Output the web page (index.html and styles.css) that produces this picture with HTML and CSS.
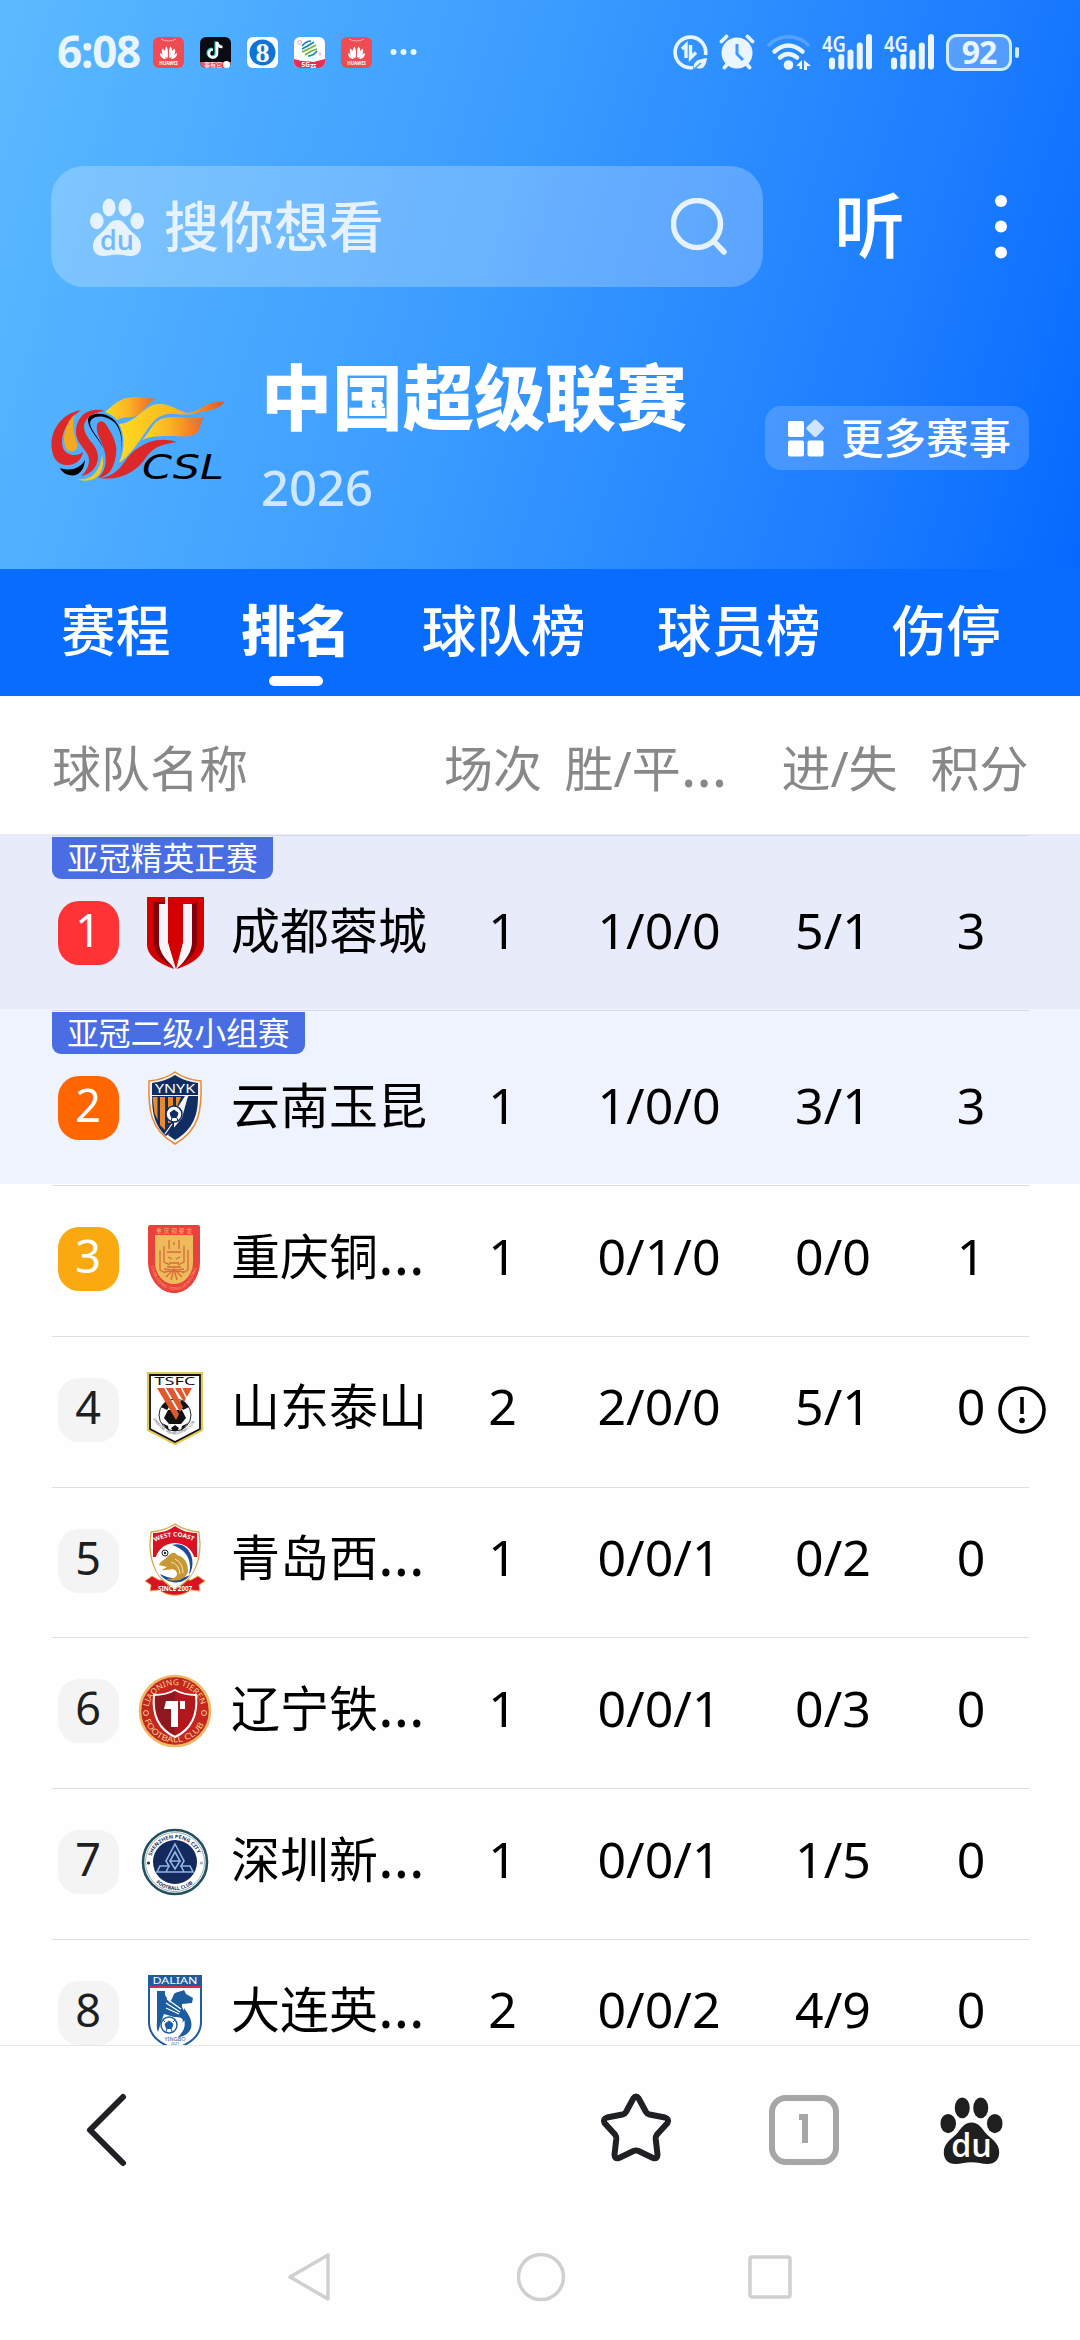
FILE: index.html
```
<!DOCTYPE html>
<html lang="zh-CN">
<head>
    <meta charset="UTF-8">
    <meta name="viewport" content="width=device-width, initial-scale=1.0">
    <title>中国超级联赛</title>
    <link rel="stylesheet" href="styles.css">
</head>
<body>
    <!-- shared shapes -->
    <svg class="defs" width="0" height="0">
        <symbol id="huawei" viewBox="0 0 31 31">
            <rect width="31" height="31" rx="6" fill="#ef4b52"/>
            <path d="M8 2q7.500 4 15 0" fill="none" stroke="#ffb3a8" stroke-width="1"/>
            <path d="M14.800 21C11 17 11 12 13.500 9.500c1.500 2 1.800 7 1.300 11.500zM16.200 21C20 17 20 12 17.500 9.500c-1.500 2-1.800 7-1.300 11.500zM14 21.300C8.500 18 8 14 9.500 11.500c2.500 2 4 5.500 4.500 9.800zM17 21.300c5.500-3.300 6-7.300 4.500-9.800-2.500 2-4 5.500-4.500 9.800zM13 22c-4 0-6-2.500-6-6 2.500 1 5 3 6 6zM18 22c4 0 6-2.500 6-6-2.500 1-5 3-6 6z" fill="#fff"/>
        </symbol>
        <symbol id="signal" viewBox="0 0 51 36">
            <path d="M10 26.500v6M19.300 23v9.500M28.500 18.500v14M37.800 11.500v21M47 3v29.500" fill="none" stroke="currentColor" stroke-width="6" stroke-linecap="round"/>
        </symbol>
        <symbol id="paw" viewBox="0 0 54 58">
            <ellipse cx="19" cy="9.500" rx="6.500" ry="9"/>
            <ellipse cx="35" cy="9.500" rx="6.500" ry="9"/>
            <ellipse cx="6.800" cy="23" rx="6.800" ry="8.300"/>
            <ellipse cx="47.200" cy="23" rx="6.800" ry="8.300"/>
            <path d="M27 22c6 0 9 5 12 9 4 5 12 8 12 17 0 6-4 10-10 10-5 0-9-1.500-14-1.500S18 58 13 58C7 58 3 54 3 48c0-9 8-12 12-17 3-4 6-9 12-9z"/>
        </symbol>
    </svg>

    <header class="hero">
        <div class="statusbar">
            <span class="clock">6:08</span>
            <div class="notices">
                <svg width="31" height="31"><use href="#huawei"/><text x="15.500" y="27.500" font-size="4.500" text-anchor="middle" font-weight="700" fill="#fff">HUAWEI</text></svg>
                <svg width="31" height="31" viewBox="0 0 31 31">
                    <rect width="31" height="31" rx="6" fill="#0b0b14"/>
                    <path d="M17 5v11.500a4 4 0 1 1-4-4M17 5c.5 3 2.500 5 5.500 5" fill="none" stroke="#25e0dc" stroke-width="3" transform="translate(-1 -.600)"/>
                    <path d="M17 5v11.500a4 4 0 1 1-4-4M17 5c.5 3 2.500 5 5.500 5" fill="none" stroke="#fff" stroke-width="2.600"/>
                    <path d="M0 25h31a6 6 0 0 1-6 6H6a6 6 0 0 1-6-6z" fill="#ef5258"/>
                    <text x="13" y="30" font-size="6" fill="#fff" text-anchor="middle">事有它</text>
                    <circle cx="26.500" cy="27.500" r="3.500" fill="#fff"/>
                </svg>
                <svg width="31" height="31" viewBox="0 0 31 31">
                    <rect width="31" height="31" rx="6" fill="#fff"/>
                    <circle cx="15.500" cy="15.500" r="13" fill="#0e74d8"/>
                    <text x="15.500" y="25" class="eight" font-size="28" fill="#fff" text-anchor="middle">8</text>
                </svg>
                <svg width="31" height="31" viewBox="0 0 31 31">
                    <rect width="31" height="31" rx="6" fill="#fff"/>
                    <g fill="none" stroke-width="1.700">
                        <path d="M8 9q4-5 9-5M8 12q6-3 12-7" stroke="#1683c4"/>
                        <path d="M8 15q7-3 14-7M11 18q5-4 12-6" stroke="#6db83a"/>
                        <path d="M14 19q5 0 9-5" stroke="#1683c4"/>
                    </g>
                    <circle cx="5.500" cy="5.500" r="2" fill="none" stroke="#f5a3b4"/>
                    <circle cx="26" cy="17" r="1.500" fill="#f9b9c5"/>
                    <path d="M0 22q15.500 5 31 0v3a6 6 0 0 1-6 6H6a6 6 0 0 1-6-6z" fill="#ee2a52"/>
                    <text x="15" y="29.500" font-size="6.500" font-weight="700" fill="#fff" text-anchor="middle">5G云</text>
                </svg>
                <svg width="31" height="31"><use href="#huawei"/><text x="15.500" y="27.500" font-size="4.500" text-anchor="middle" font-weight="700" fill="#fff">HUAWEI</text></svg>
                <svg class="more-dots" width="27" height="8" viewBox="0 0 27 8"><circle cx="3.500" cy="4" r="3"/><circle cx="13.500" cy="4" r="3"/><circle cx="23.500" cy="4" r="3"/></svg>
            </div>
            <div class="indicators">
                <svg width="35" height="35" viewBox="0 0 35 35">
                    <path d="M20 32.500A15.300 15.300 0 1 1 32.500 20" fill="none" stroke="currentColor" stroke-width="3.600"/>
                    <path d="M9 14l4-4v13M17.500 10v13l5.500-5.500" fill="none" stroke="currentColor" stroke-width="3.400"/>
                    <path d="M21 34c-2-7 4-10 13-11-1 9-5 12-10 10z"/>
                    <path d="M20 35l8-7" stroke="#3b99ff" stroke-width="1.400"/>
                </svg>
                <svg width="36" height="36" viewBox="0 0 36 36">
                    <circle cx="18" cy="19" r="15.500"/>
                    <path d="M2.500 7.500l5-5M33.500 7.500l-5-5M5.500 33.500l5-6M30.500 33.500l-5-6" fill="none" stroke="currentColor" stroke-width="3.800" stroke-linecap="round"/>
                    <path d="M18 10v10l6 6" fill="none" stroke="#3b99ff" stroke-width="3"/>
                </svg>
                <svg class="wifi" width="44" height="35" viewBox="0 0 44 35">
                    <g fill="none" stroke="currentColor" stroke-linecap="round">
                        <path d="M2 10C12-1 31-1 41 10" stroke-width="3.500" opacity=".22"/>
                        <path d="M7.500 16.500q13.500-12 28 0" stroke-width="4.500"/>
                        <path d="M13 22.500q8-7 17 0" stroke-width="4.500"/>
                    </g>
                    <circle cx="21.500" cy="30" r="4.800"/>
                    <path d="M29 31l6-6v9h-2.500v-3zM37 25l7 6h-4v4h-3z"/>
                </svg>
                <svg class="signal" width="51" height="36"><use href="#signal"/><text x="0" y="18" font-size="22" font-weight="600" textLength="24" lengthAdjust="spacingAndGlyphs">4G</text></svg>
                <svg class="signal" width="51" height="36"><use href="#signal"/><text x="0" y="18" font-size="22" font-weight="600" textLength="24" lengthAdjust="spacingAndGlyphs">4G</text></svg>
                <div class="battery"><span class="level">92</span></div>
            </div>
        </div>

        <div class="searchbar">
            <div class="search-box">
                <svg class="search-paw" width="54" height="58" viewBox="0 0 54 58">
                    <use href="#paw"/>
                    <text x="27" y="52" class="du" font-size="27" text-anchor="middle" fill="#75b8ff">du</text>
                </svg>
                <span class="placeholder">搜你想看</span>
                <svg class="magnifier" width="56" height="57" viewBox="0 0 56 57">
                    <circle cx="26" cy="26" r="23.500"/>
                    <path d="M43 43.500l10 10.500"/>
                </svg>
            </div>
            <span class="listen">听</span>
            <svg class="menu-dots" width="12" height="64" viewBox="0 0 12 64"><circle cx="6" cy="6" r="6"/><circle cx="6" cy="31.500" r="6"/><circle cx="6" cy="57.500" r="6"/></svg>
        </div>

        <div class="league">
            <svg class="csl" width="174" height="88" viewBox="0 0 174 88">
                <defs>
                    <linearGradient id="flame"><stop offset="0" stop-color="#ffd91f"/><stop offset=".45" stop-color="#fbb324"/><stop offset="1" stop-color="#ee6426"/></linearGradient>
                    <linearGradient id="body"><stop offset="0" stop-color="#ffd91f"/><stop offset=".6" stop-color="#f9b322"/><stop offset="1" stop-color="#e8542a"/></linearGradient>
                </defs>
                <path d="M30 14C8 18-2 38 1 54c1 10 8 16 16 15 8 0 14-6 15-13-6 5-17 4-20-4C8 41 16 24 30 14z" fill="#dc2828"/>
                <path d="M24 18c-9 8-13 22-10 32 3 9 14 6 12-3-3-9-6-18-2-29z" fill="#f5a91e"/>
                <path d="M54 15C38 10 25 20 25 36c0 13 13 18 13 28 0 6-3 12-8 16 9-1 17-9 17-19 0-13-13-17-14-30 0-9 10-15 21-16z" fill="#dc2828"/>
                <path d="M69 62c3-14 2-27-5-35-7-7-19-9-24-3-4 7 7 15 13 29-6-11-16-20-16-29 0-7 15-9 24-2 10 8 12 22 8 40z" fill="#000"/>
                <path d="M46 29c1-5 7-5 10 1 8 13 13 23 6 40-2 6-8 11-15 12 7-7 9-14 7-25-2-10-10-20-8-28z" fill="#dc2828"/>
                <path d="M26 83c13 2 23-6 25-24 3 10 0 22-11 25-5 1-10 1-14-1z" fill="#f6c91e"/>
                <path d="M9 72c9 3 19 2 25-8-1 12-8 17-16 15-4-1-8-4-9-7z" fill="#000"/>
                <path d="M54 16C64 8 69 1 85 1c8 0 14 1 20 2-11 4-13 17-24 18-6 1-10 0-15 3-3-4-7-6-12-8z" fill="url(#flame)"/>
                <path d="M68 28c18-1 24-19 39-20 12-1 20 7 30 9 14-2 18-13 36-11-3 8-21 9-31 12-12 2-22-3-32 2-14 6-20 31-42 47 6-13 6-28 0-39z" fill="url(#body)"/>
                <path d="M91 44c8-7 11-20 22-22 13-3 28 2 40-1-5 6-2 17-14 19-11 2-33-3-48 4z" fill="url(#flame)"/>
                <path d="M126 46c-15-5-29-1-39 6-15 9-15 27-38 30 20 3 37-6 47-22 8-10 16-12 30-14z" fill="#dc2828"/>
                <text x="91" y="83" class="csl-name" font-size="33" fill="#000" textLength="82" lengthAdjust="spacingAndGlyphs">CSL</text>
            </svg>
            <div class="league-info">
                <h1 class="league-name">中国超级联赛</h1>
                <div class="season">2026</div>
            </div>
            <div class="more-button">
                <svg width="36" height="40" viewBox="0 0 36 40">
                    <rect y="3" width="16" height="16" rx="2"/>
                    <rect y="22.500" width="16" height="16" rx="2"/>
                    <rect x="19.500" y="22.500" width="16" height="16" rx="2"/>
                    <rect x="20.500" y="3.500" width="13.500" height="13.500" rx="2" opacity=".75" transform="rotate(45 27.200 10.200)"/>
                </svg>
                <span>更多赛事</span>
            </div>
        </div>
    </header>

    <nav class="tabs">
        <span class="tab">赛程</span>
        <span class="tab active">排名</span>
        <span class="tab">球队榜</span>
        <span class="tab">球员榜</span>
        <span class="tab">伤停</span>
    </nav>

    <main class="standings">
        <div class="row head">
            <span class="team-head">球队名称</span>
            <span class="played-head">场次</span>
            <span class="wdl-head">胜/平<i class="dots">…</i></span>
            <span class="goals-head">进/失</span>
            <span class="points-head">积分</span>
        </div>

        <div class="zone zone-elite">
            <div class="line"></div>
            <div class="tag">亚冠精英正赛</div>
            <div class="row">
                <span class="rank first">1</span>
                <svg class="crest" width="74" height="74" viewBox="0 0 74 74">
                    <path d="M9 1h18v7h-6v39l15 26C18 67 9 58 9 49zM30 1h36v48c0 9-9 18-27 24l15-27V8h-9v39l-7 26-8-26z" fill="#d40000"/>
                    <path d="M16 6h11v2h-6v39l12 23C20 62 16 54 16 46zM59 6v40c0 8-6 16-15 23l10-23V8z" fill="#850009"/>
                    <path d="M21 8h9v39l7 25C25 62 21 54 21 46zM45 8h9v38c0 8-5 18-15 26l6-25z" fill="#f7f5fc"/>
                </svg>
                <span class="team">成都蓉城</span>
                <span>1</span><span>1/0/0</span><span>5/1</span><span>3</span>
            </div>
        </div>

        <div class="zone zone-second">
            <div class="line"></div>
            <div class="tag">亚冠二级小组赛</div>
            <div class="row">
                <span class="rank second">2</span>
                <svg class="crest" width="74" height="74" viewBox="0 0 74 74">
                    <path d="M37 1c8 6 16 8 26 9 1 28-1 49-26 63C12 59 10 38 11 10c10-1 18-3 26-9z" fill="#f3f3f3" stroke="#e98a2e" stroke-width="1.500"/>
                    <path d="M37 4c8 5 15 7 23 8v12H14V12c8-1 15-3 23-8zM14 25h33L36 42v17l-8 6C17 55 14 43 14 25z" fill="#102e62"/>
                    <path d="M60 25c0 18-4 33-23 44l-7-5 14-17 6-22z" fill="#102e62"/>
                    <path d="M14.500 26h5v23l-3-7zM22 26h5v33l-5-5zM30 26h5v14l-2 9v3h-3zM38 26h5l-5 12z" fill="#e98a2e"/>
                    <path d="M50 25l-9 13M34 53l-7 10" stroke="#fff" stroke-width="1.200"/>
                    <text x="37" y="22" font-size="12" class="block" fill="#fff" text-anchor="middle" textLength="40" lengthAdjust="spacingAndGlyphs">YNYK</text>
                    <circle cx="36" cy="43" r="8" fill="#fff" stroke="#102e62" stroke-width="1.500"/>
                    <path d="M36 39l4 3-1.500 4.500h-5L32 42zM29 40l2-3M43 40l-2-3M33 50l1-3M40 50l-1-3" fill="#102e62" stroke="#102e62"/>
                </svg>
                <span class="team">云南玉昆</span>
                <span>1</span><span>1/0/0</span><span>3/1</span><span>3</span>
            </div>
        </div>

        <div class="zone">
            <div class="line"></div>
            <div class="row">
                <span class="rank third">3</span>
                <svg class="crest" width="74" height="74" viewBox="0 0 74 74">
                    <path d="M10 5q0-2 2-2h48q2 0 2 2v34c0 17-11 32-26 32S10 56 10 39z" fill="#e9413b"/>
                    <path d="M17 13h38v27c0 12-8 22-19 22S17 52 17 40z" fill="#eebb5c"/>
                    <g fill="none" stroke="#d96a39" stroke-width="1.300">
                        <path d="M22 28v20l5 3M50 28v20l-5 3M26 24v16l6 3M46 24v16l-6 3M31 18v9M41 18v9M29 30h14M30 35l4 2M42 35l-4 2M31 41h10M29 45h14M36 20v3"/>
                        <path d="M26 50l20-3M26 47l20 3M28 55l8-8 8 8M33 58l3-11 3 11"/>
                    </g>
                    <text x="36" y="10.500" font-size="6" fill="#f6b26a" text-anchor="middle" textLength="36">重庆铜梁龙</text>
                    <path id="cq" d="M13 44c3 14 11 24 23 24s20-10 23-24" fill="none"/>
                    <text font-size="4" fill="#f9b07c"><textPath href="#cq" textLength="70">CHONGQING TONGLIANGLONG</textPath></text>
                </svg>
                <span class="team">重庆铜<i class="dots">…</i></span>
                <span>1</span><span>0/1/0</span><span>0/0</span><span>1</span>
            </div>
        </div>

        <div class="zone">
            <div class="line"></div>
            <div class="row">
                <span class="rank">4</span>
                <svg class="crest" width="74" height="74" viewBox="0 0 74 74">
                    <path d="M10 1h54v57L37 72 10 58z" fill="#fff" stroke="#dfca52" stroke-width="2.200"/>
                    <path d="M12 3h50v54L37 70 12 57z" fill="none" stroke="#111" stroke-width="1.800"/>
                    <text x="37" y="13" font-size="10" class="serif" fill="#111" text-anchor="middle" textLength="41" lengthAdjust="spacingAndGlyphs">TSFC</text>
                    <circle cx="37" cy="43" r="16" fill="#fff" stroke="#222"/>
                    <path d="M30 38h14l4 8-5 6H31l-5-6zM23 35l6-7 5 3-5 7zM51 35l-6-7-5 3 5 7zM24 51l6 3 1 5zM50 51l-6 3-1 5zM33 56l4-3 4 3-2 3h-4z" fill="#111"/>
                    <path d="M19 16h7l15 26-3 6zM28 16h7l10 19-3 5zM37 16h17l-8 14z" fill="#df5a2b"/>
                    <path d="M43 15l6 12" stroke="#fff" stroke-width="1.500"/>
                    <path id="ts" d="M15 47q22 31 44 0" fill="none"/>
                    <text font-size="3.500" fill="#444"><textPath href="#ts" textLength="52" lengthAdjust="spacingAndGlyphs">SHANDONG TAISHAN FOOTBALL CLUB</textPath></text>
                </svg>
                <span class="team">山东泰山</span>
                <span>2</span><span>2/0/0</span><span>5/1</span>
                <span class="points">0<svg class="notice" width="48" height="48" viewBox="0 0 48 48"><circle cx="24" cy="24" r="22"/><path d="M24 11v17"/><circle class="dot" cx="24" cy="34.500" r="2.800"/></svg></span>
            </div>
        </div>

        <div class="zone">
            <div class="line"></div>
            <div class="row">
                <span class="rank">5</span>
                <svg class="crest" width="74" height="74" viewBox="0 0 74 74">
                    <path d="M7 58l7-5 7 4h32l7-4 7 5-6 4 1 6-9-1c-10 7-22 7-32 0l-9 1 1-6z" fill="#d81324" stroke="#e9b24f"/>
                    <path d="M37 1c7 5 15 7 24 8 0 4 1 8 1 12 0 22-8 36-25 45C20 57 12 43 12 21c0-4 1-8 1-12 9-1 17-3 24-8z" fill="#fff" stroke="#d9a548" stroke-width="1.300"/>
                    <path d="M37 3c7 5 14 7 22 7v24H15V10c8 0 15-2 22-7z" fill="#d81324"/>
                    <circle cx="37" cy="40" r="20" fill="#fff"/>
                    <path d="M34 22c17-5 26 17 17 30 4-16-4-26-17-30zM22 51c6 10 23 12 30 1-10 5-21 4-30-1z" fill="#1a4c9a"/>
                    <path d="M21 42c1-4 6-5 9-9 5-5 8-3 9-1 8 2 11 8 11 17-3 8-13 11-22 7 9 0 13-3 10-8-3-4-9 0-14-1l5-3z" fill="#c79835"/>
                    <path d="M33 39q8 2 9 12M37 36q8 4 8 14" fill="none" stroke="#f4e3b8"/>
                    <circle cx="27" cy="30" r="3" fill="#fff" stroke="#222"/><circle cx="27" cy="30" r="1.200" fill="#222"/>
                    <path id="wc" d="M17 19q20-11 40 0" fill="none"/>
                    <text font-size="6" font-weight="700" fill="#fff"><textPath href="#wc" textLength="40" lengthAdjust="spacingAndGlyphs">WEST COAST</textPath></text>
                    <text x="37" y="68" font-size="6.500" font-weight="700" fill="#fff" text-anchor="middle" textLength="34" lengthAdjust="spacingAndGlyphs">SINCE 2007</text>
                </svg>
                <span class="team">青岛西<i class="dots">…</i></span>
                <span>1</span><span>0/0/1</span><span>0/2</span><span>0</span>
            </div>
        </div>

        <div class="zone">
            <div class="line"></div>
            <div class="row">
                <span class="rank">6</span>
                <svg class="crest" width="74" height="74" viewBox="0 0 74 74">
                    <circle cx="37" cy="37" r="35" fill="#c3271f" stroke="#f0b765" stroke-width="2.600"/>
                    <path d="M37 16c7 4 14 5 21 5 2 20-4 34-21 42-17-8-23-22-21-42 7 0 14-1 21-5z" fill="#b3161d" stroke="#fff" stroke-width="2"/>
                    <path d="M37 17c-6 4-12 5-19 5-2 18 3 31 19 39z" fill="#8f1720"/>
                    <path d="M28 27h12v26h-7V35h-7zM42 27h5v8h-5z" fill="#fff"/>
                    <path id="lnTop" d="M10.500 33A27 27 0 0 1 63.500 33" fill="none"/>
                    <path id="lnBottom" d="M6.500 46A32 32 0 0 0 67.500 46" fill="none"/>
                    <text font-size="8" fill="#f7cf8c"><textPath href="#lnTop" textLength="72" lengthAdjust="spacingAndGlyphs">LIAONING TIEREN</textPath></text>
                    <text font-size="8" fill="#f7cf8c"><textPath href="#lnBottom" textLength="76" lengthAdjust="spacingAndGlyphs">FOOTBALL CLUB</textPath></text>
                    <circle cx="8" cy="39" r="2.500" fill="none" stroke="#f7cf8c"/><circle cx="66" cy="39" r="2.500" fill="none" stroke="#f7cf8c"/>
                </svg>
                <span class="team">辽宁铁<i class="dots">…</i></span>
                <span>1</span><span>0/0/1</span><span>0/3</span><span>0</span>
            </div>
        </div>

        <div class="zone">
            <div class="line"></div>
            <div class="row">
                <span class="rank">7</span>
                <svg class="crest" width="74" height="74" viewBox="0 0 74 74">
                    <circle cx="37" cy="37" r="32" fill="#fff" stroke="#23505c" stroke-width="2.600"/>
                    <circle cx="37" cy="37" r="29.500" fill="none" stroke="#7f9ba0" stroke-width=".8"/>
                    <circle cx="37" cy="37" r="22" fill="#14295c"/>
                    <path d="M37 19l9 17-3 5h9l3 6H19l3-6h9l-3-5zM37 27l-5 9 5 8 5-8zM31 36h12M28 47l3-6M46 47l-3-6" fill="none" stroke="#8fb4e8" stroke-width="1.600"/>
                    <path id="szTop" d="M13.500 31A24.500 24.500 0 0 1 60.500 31" fill="none"/>
                    <path id="szBottom" d="M18 57.500A28 28 0 0 0 56 57.500" fill="none"/>
                    <text font-size="5" font-weight="700" fill="#1d2f5c"><textPath href="#szTop" textLength="60" lengthAdjust="spacingAndGlyphs">SHENZHEN PENG CITY</textPath></text>
                    <text font-size="5" font-weight="700" fill="#1d2f5c"><textPath href="#szBottom" textLength="40" lengthAdjust="spacingAndGlyphs">FOOTBALL CLUB</textPath></text>
                    <circle cx="10.500" cy="38" r="1.600" fill="#1d2f5c"/><circle cx="63.500" cy="38" r="1.600" fill="#9fb1ba"/>
                </svg>
                <span class="team">深圳新<i class="dots">…</i></span>
                <span>1</span><span>0/0/1</span><span>1/5</span><span>0</span>
            </div>
        </div>

        <div class="zone">
            <div class="line"></div>
            <div class="row">
                <span class="rank">8</span>
                <svg class="crest" width="74" height="74" viewBox="0 0 74 74">
                    <path d="M11 1h52v46c0 12-8 21-26 27C19 68 11 59 11 47z" fill="#fff" stroke="#1d5d9f" stroke-width="2"/>
                    <path d="M10 0h54v11H10z" fill="#1d5d9f"/>
                    <path d="M11 11h52v2H11z" fill="#d42c49"/>
                    <text x="37" y="9" font-size="9" class="block" fill="#fff" text-anchor="middle" textLength="45" lengthAdjust="spacingAndGlyphs">DALIAN</text>
                    <path d="M19 16h8v4l5 8 4-9c3-3 7-2 10-4l2 4 7 4-1 5-10 1c-1 5 5 8 4 13-1 3-3 5-4 6 3-5-2-6-8-6l-10-3-3 8-3 10c-2-4-1-8-1-12z" fill="#1d5d9f"/>
                    <path d="M46 33c4 6 9 12 7 20-2 6-8 9-13 9 6-6 8-11 6-18z" fill="#1d5d9f"/>
                    <path d="M29 24l14 10M28 28l14 9M28 33l13 6" stroke="#fff" stroke-width="1.200"/>
                    <circle cx="31" cy="50" r="8" fill="#fff" stroke="#1d5d9f" stroke-width="1.500"/>
                    <path d="M31 46l4 3-1.500 4.500h-5L27 49zM25 45l2 2M37 45l-2 2M28 57l1-3M34 57l-1-3" fill="#1d5d9f" stroke="#1d5d9f"/>
                    <text x="37" y="66" font-size="5.500" class="block" fill="#1d5d9f" text-anchor="middle">YINGBO</text>
                    <text x="37" y="70" font-size="3.500" class="block" fill="#1d5d9f" text-anchor="middle">2021</text>
                </svg>
                <span class="team">大连英<i class="dots">…</i></span>
                <span>2</span><span>0/0/2</span><span>4/9</span><span>0</span>
            </div>
        </div>
    </main>

    <footer class="toolbar">
        <svg class="back" width="44" height="76" viewBox="0 0 44 76"><path d="M39 5L6 38l33 33"/></svg>
        <svg class="star" width="76" height="72" viewBox="0 0 76 72"><path d="M35.300 6.500Q38 2.500 40.700 6.500L48 20Q49 22 51.500 22.500L67 25.500Q71.500 27 69.500 31L59 42.500Q57.500 44.500 57.700 47L59.500 62.500Q59.500 67.500 55 66L40.500 59Q38 58 35.500 59L21 66Q16.500 67.500 16.500 62.500L18.300 47Q18.500 44.500 17 42.500L6.500 31Q4.500 27 9 25.500L24.500 22.500Q27 22 28 20Z"/></svg>
        <div class="tab-count"><svg width="14" height="34" viewBox="0 0 14 34"><path d="M2 4h6v26"/></svg></div>
        <svg class="home-paw" width="63" height="67" viewBox="0 0 54 58">
            <use href="#paw"/>
            <text x="27" y="52" class="du" font-size="28" text-anchor="middle" fill="#fff">du</text>
        </svg>
    </footer>

    <div class="sysnav">
        <svg width="48" height="50" viewBox="0 0 48 50"><path d="M42 3v44L4 25z"/></svg>
        <svg width="50" height="50" viewBox="0 0 50 50"><circle cx="25" cy="25" r="22.500"/></svg>
        <svg width="44" height="46" viewBox="0 0 44 46"><rect x="2" y="3" width="40" height="40" rx="2"/></svg>
    </div>
</body>
</html>
```
FILE: styles.css
```
* {
    box-sizing: border-box;
}
body {
    margin: 0;
    width: 1080px;
    height: 2340px;
    overflow: hidden;
    display: flex;
    flex-direction: column;
    background: #fefefe;
    color: #000;
    font-family: "Noto Sans", "Noto Sans CJK SC", sans-serif;
}
svg {
    display: block;
    flex: none;
    fill: currentColor;
}
.defs {
    position: absolute;
}

/* header */
.hero {
    height: 569px;
    flex: none;
    background: linear-gradient(107deg, #5cbaff 0%, #3c9dff 43%, #1a7bff 82%, #0569ff 100%);
    color: #fff;
}
.statusbar {
    height: 104px;
    padding: 0 61px 0 57px;
    display: flex;
    align-items: center;
    color: #e9f5ff;
}
.clock {
    width: 96px;
    margin-top: -2px;
    font-size: 44px;
    font-weight: 700;
    line-height: 60px;
    letter-spacing: -1.2px;
}
.notices {
    display: flex;
    align-items: center;
    gap: 16px;
}
.more-dots {
    margin-left: 2px;
}
.eight {
    font-family: "Liberation Serif", serif;
    font-weight: 700;
}
.indicators {
    margin-left: auto;
    display: flex;
    align-items: center;
    gap: 11px;
}
.wifi {
    margin-left: 1px;
}
.battery {
    position: relative;
    width: 66px;
    height: 37px;
    margin-right: 7px;
    border: 3px solid #d3ebff;
    border-radius: 11px;
    background: rgba(255, 255, 255, 0.25);
    text-align: center;
}
.battery::after {
    content: "";
    position: absolute;
    right: -10px;
    top: 10px;
    width: 4px;
    height: 11px;
    border-radius: 2px;
    background: #d3ebff;
}
.level {
    display: block;
    font-size: 32px;
    font-weight: 700;
    line-height: 30px;
    letter-spacing: -1px;
}
.searchbar {
    margin-top: 62px;
    height: 121px;
    padding: 0 73px 0 51px;
    display: flex;
    align-items: center;
}
.search-box {
    width: 712px;
    height: 121px;
    padding: 0 36px 0 39px;
    border-radius: 33px;
    background: rgba(255, 255, 255, 0.24);
    display: flex;
    align-items: center;
    color: #e6f3ff;
}
.du {
    font-family: "Open Sans", sans-serif;
    font-weight: 600;
}
.placeholder {
    margin-left: 20px;
    margin-top: -1px;
    font-size: 55px;
    font-weight: 500;
    line-height: 60px;
}
.magnifier {
    margin-left: auto;
    fill: none;
    stroke: currentColor;
    stroke-width: 5.5;
    stroke-linecap: round;
}
.listen {
    margin-left: 71px;
    margin-top: -4px;
    font-size: 71px;
    font-weight: 500;
    line-height: 90px;
}
.menu-dots {
    margin-left: auto;
}
.league {
    margin-top: 65px;
    padding: 0 51px;
    display: flex;
    align-items: flex-start;
}
.csl {
    margin-top: 44px;
}
.csl-name {
    font-family: "DejaVu Sans", sans-serif;
    font-style: oblique;
}
.league-info {
    margin-left: 36px;
}
.league-name {
    margin: 0;
    font-size: 71px;
    font-weight: 900;
    line-height: 90px;
}
.season {
    font-size: 49px;
    font-weight: 500;
    line-height: 60px;
    margin-top: 15px;
    color: #d0e8ff;
}
.more-button {
    margin: 54px 0 0 auto;
    width: 264px;
    height: 64px;
    padding-left: 23px;
    border-radius: 16px;
    background: rgba(255, 255, 255, 0.17);
    display: flex;
    align-items: center;
    gap: 17px;
    font-size: 42.5px;
    font-weight: 500;
    line-height: 60px;
    white-space: nowrap;
}

/* tabs */
.tabs {
    height: 127px;
    flex: none;
    padding: 0 79px 0 61px;
    display: flex;
    justify-content: space-between;
    background: #086cff;
    color: #fff;
    font-size: 54.7px;
    font-weight: 500;
    line-height: 123px;
}
.tab.active {
    position: relative;
    font-weight: 900;
}
.tab.active::after {
    content: "";
    position: absolute;
    left: 50%;
    top: 107px;
    width: 54px;
    height: 10px;
    margin-left: -27px;
    border-radius: 5px;
    background: #fff;
}

/* standings table */
.standings {
    height: 1350px;
    flex: none;
    overflow: hidden;
    border-bottom: 1px solid #e6e6e6;
}
.row {
    height: 142px;
    margin: 0 50px 0 52px;
    display: grid;
    grid-template-columns: 74px 98px 220px 117px 196px 152px 124px;
    align-items: center;
    text-align: center;
    font-size: 50px;
    line-height: 56px;
    white-space: nowrap;
}
.row > span {
    margin-bottom: 3px;
}
.head {
    height: 138px;
    padding-top: 9px;
    font-size: 49px;
    color: #888;
}
.team-head {
    grid-column: span 3;
    text-align: left;
}
.played-head {
    margin-left: -19px;
}
.wdl-head {
    margin-left: -26px;
}
.goals-head {
    margin-left: 13px;
}
.points-head {
    margin-left: 17px;
}
.dots {
    font-size: 59px;
    font-style: normal;
    line-height: 0;
}
.zone {
    position: relative;
    height: 150.8px;
    padding-top: 1px;
}
.line {
    height: 1px;
    margin: 0 51px 0 52px;
    background: #dfdfe1;
}
.zone-elite,
.zone-second {
    height: 175px;
}
.zone-elite {
    background: #e7ebfa;
}
.zone-second {
    background: #eff3fe;
}
.zone-elite .line,
.zone-second .line {
    background: #d5d9e8;
}
.zone-elite .row,
.zone-second .row {
    margin-top: 24px;
}
.tag {
    position: absolute;
    left: 52px;
    top: 3px;
    height: 42px;
    padding: 0 15px;
    border-radius: 0 0 9px 9px;
    background: #496de3;
    color: #fff;
    font-size: 31.8px;
    line-height: 41px;
}
.row .rank {
    justify-self: center;
    width: 61px;
    height: 64px;
    margin: 4px 2px 0 0;
    border-radius: 21px;
    background: #f4f4f4;
    color: #1f1f1f;
    font-size: 45px;
    line-height: 58px;
}
.row .first {
    background: #ff3335;
    color: #fff;
}
.row .second {
    background: #ff6600;
    color: #fff;
}
.row .third {
    background: #faaa10;
    color: #fff;
}
.crest {
    justify-self: center;
    margin-top: 3px;
}
.team {
    padding-left: 7px;
    text-align: left;
    font-size: 49px;
}
.points {
    position: relative;
}
.notice {
    position: absolute;
    left: 89px;
    top: 8px;
    fill: none;
    stroke: #000;
    stroke-width: 3.6;
}
.notice .dot {
    fill: #000;
    stroke: none;
}

/* bottom bars */
.toolbar {
    height: 166px;
    flex: none;
    padding: 2px 77px 0 84px;
    display: flex;
    align-items: center;
    color: #1f1f1f;
}
.back,
.star {
    fill: none;
    stroke: #1f2024;
    stroke-width: 6;
    stroke-linecap: round;
    stroke-linejoin: round;
}
.star {
    margin-left: auto;
    margin-top: -5px;
}
.tab-count {
    width: 70px;
    height: 70px;
    margin: 0 101px 0 95px;
    border: 6px solid #a6a6a6;
    border-radius: 17px;
    display: flex;
    align-items: center;
    justify-content: center;
}
.tab-count svg {
    fill: none;
    stroke: #a6a6a6;
    stroke-width: 6;
}
.sysnav {
    padding: 40px 288px 0 286px;
    display: flex;
    justify-content: space-between;
    align-items: center;
}
.sysnav svg {
    fill: none;
    stroke: #d0d0d0;
    stroke-width: 3.5;
    stroke-linejoin: round;
}
```
